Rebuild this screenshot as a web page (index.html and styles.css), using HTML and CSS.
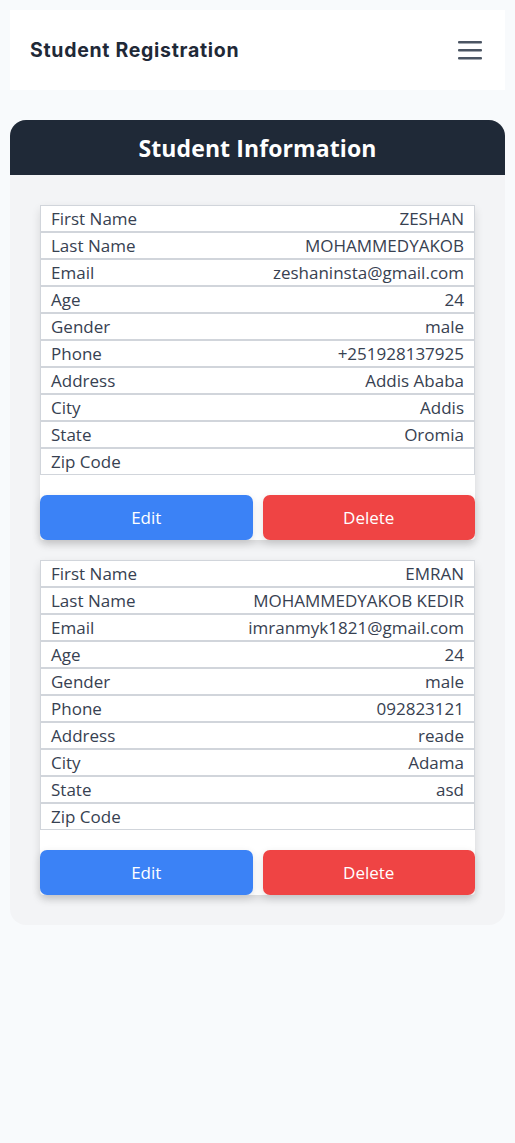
FILE: index.html
```html
<!DOCTYPE html>
<html lang="en">
<head>
<meta charset="utf-8">
<title>Student Registration</title>
<link rel="stylesheet" href="styles.css">
</head>
<body>
<header class="navbar">
  <span class="brand">Student Registration</span>
  <svg class="menu" width="24" height="19" viewBox="0 0 24 19" aria-hidden="true">
    <rect x="0" y="0" width="24" height="2.5" rx="1" fill="#4b5563"/>
    <rect x="0" y="8" width="24" height="2.5" rx="1" fill="#4b5563"/>
    <rect x="0" y="16" width="24" height="2.5" rx="1" fill="#4b5563"/>
  </svg>
</header>
<main class="panel">
  <h1 class="panel-title">Student Information</h1>
  <div class="panel-body">
    <section class="student">
      <div class="rows">
        <div class="row"><span>First Name</span><span>ZESHAN</span></div>
        <div class="row"><span>Last Name</span><span>MOHAMMEDYAKOB</span></div>
        <div class="row"><span>Email</span><span>zeshaninsta@gmail.com</span></div>
        <div class="row"><span>Age</span><span>24</span></div>
        <div class="row"><span>Gender</span><span>male</span></div>
        <div class="row"><span>Phone</span><span>+251928137925</span></div>
        <div class="row"><span>Address</span><span>Addis Ababa</span></div>
        <div class="row"><span>City</span><span>Addis</span></div>
        <div class="row"><span>State</span><span>Oromia</span></div>
        <div class="row"><span>Zip Code</span><span></span></div>
      </div>
      <div class="actions">
        <button class="btn btn-edit">Edit</button>
        <button class="btn btn-delete">Delete</button>
      </div>
    </section>
    <section class="student">
      <div class="rows">
        <div class="row"><span>First Name</span><span>EMRAN</span></div>
        <div class="row"><span>Last Name</span><span>MOHAMMEDYAKOB KEDIR</span></div>
        <div class="row"><span>Email</span><span>imranmyk1821@gmail.com</span></div>
        <div class="row"><span>Age</span><span>24</span></div>
        <div class="row"><span>Gender</span><span>male</span></div>
        <div class="row"><span>Phone</span><span>092823121</span></div>
        <div class="row"><span>Address</span><span>reade</span></div>
        <div class="row"><span>City</span><span>Adama</span></div>
        <div class="row"><span>State</span><span>asd</span></div>
        <div class="row"><span>Zip Code</span><span></span></div>
      </div>
      <div class="actions">
        <button class="btn btn-edit">Edit</button>
        <button class="btn btn-delete">Delete</button>
      </div>
    </section>
  </div>
</main>
</body>
</html>
```

FILE: styles.css
```css
* { box-sizing: border-box; }
html, body { margin: 0; }
body {
  background: #f8fafc;
  padding: 10px;
  font-family: "Open Sans", "Noto Sans", sans-serif;
  color: #374151;
}
.navbar {
  background: #ffffff;
  height: 80px;
  display: flex;
  align-items: center;
  justify-content: space-between;
  padding: 0 23px 0 20px;
}
.brand {
  font-family: "Inter", "Open Sans", sans-serif;
  font-weight: 700;
  font-size: 19.5px;
  color: #1f2937;
  letter-spacing: 0.7px;
}
.menu { display: block; }
.panel {
  margin-top: 30px;
  background: #f3f4f6;
  border-radius: 16px;
  overflow: hidden;
}
.panel-title {
  margin: 0;
  height: 55px;
  background: #1f2937;
  color: #ffffff;
  font-size: 23px;
  font-weight: 700;
  text-align: center;
  line-height: 57px;
  font-family: "Open Sans", sans-serif;
  letter-spacing: 0.1px;
}
.panel-body {
  padding: 30px;
  display: flex;
  flex-direction: column;
  gap: 20px;
}
.student {
  background: #ffffff;
  border-radius: 4px;
  box-shadow: 0 4px 10px rgba(0,0,0,0.12);
}
.rows {
  border-left: 1px solid #d1d5db;
  border-right: 1px solid #d1d5db;
}
.row {
  display: flex;
  justify-content: space-between;
  height: 27px;
  padding: 0 10px;
  border-bottom: 1px solid #d1d5db;
  box-shadow: inset 0 1px 0 #d1d5db;
  font-size: 17px;
  line-height: 27px;
}
.actions {
  display: flex;
  gap: 10px;
  padding-top: 20px;
}
.btn {
  flex: 1;
  height: 45px;
  border: none;
  border-radius: 7px;
  color: #ffffff;
  font-size: 17px;
  font-family: "Open Sans", sans-serif;
  box-shadow: 0 3px 8px rgba(0,0,0,0.12);
}
.btn-edit { background: #3b82f6; }
.btn-delete { background: #ef4444; }
```
